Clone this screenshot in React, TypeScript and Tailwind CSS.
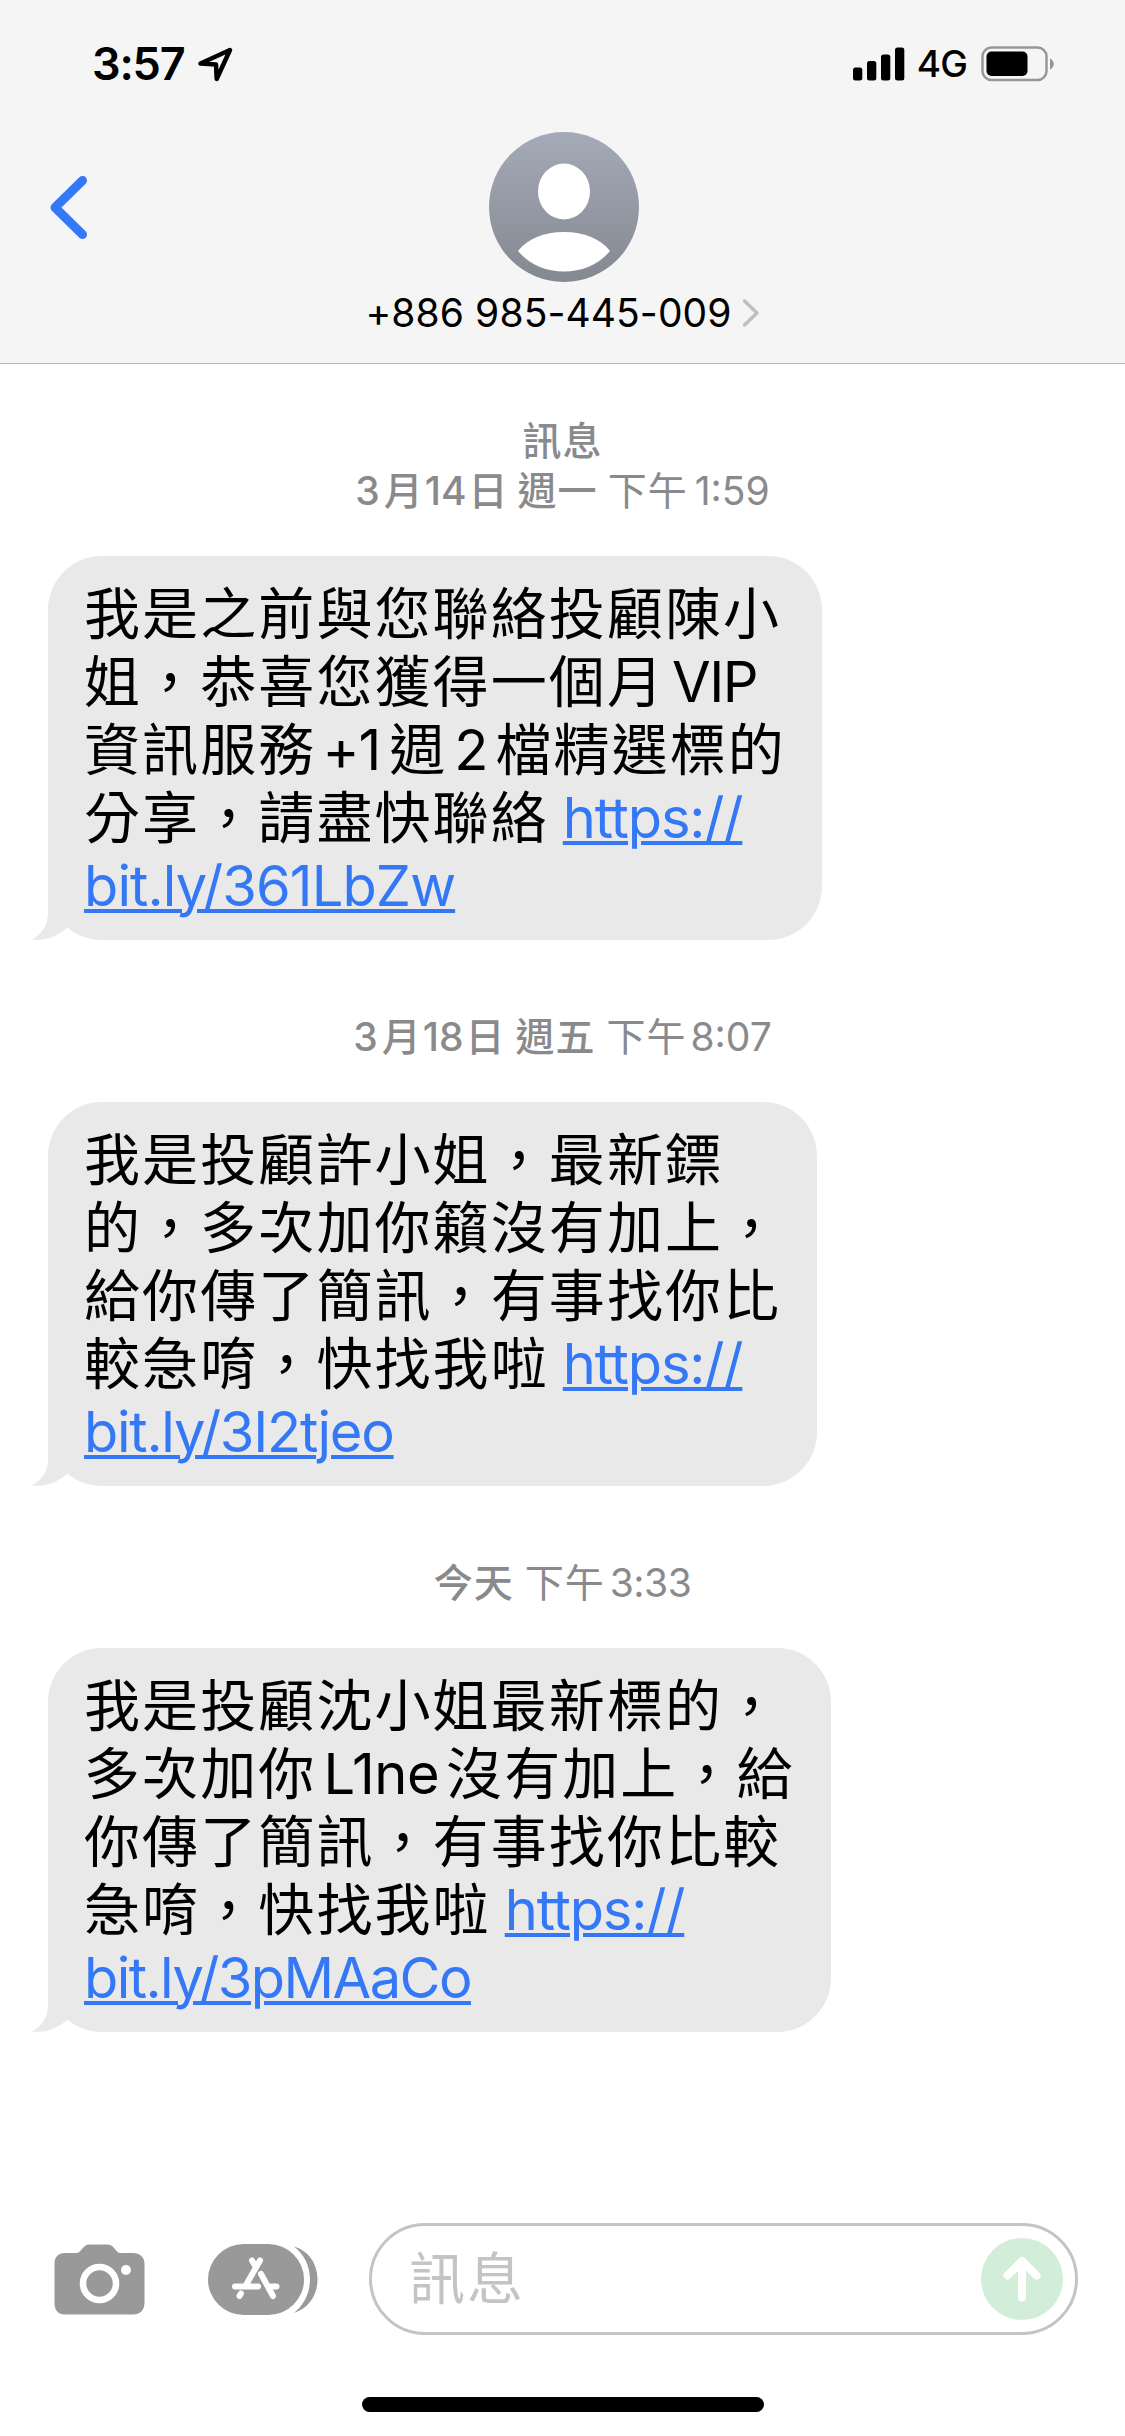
const sans = "font-['Inter','Noto_Sans_CJK_TC',sans-serif]";

type Run = { text: string; link?: boolean; cls: string };
type Message = { id: number; title?: string; stamp: Run[]; width: string; lines: Run[][] };

const CJK = "tracking-[2.1px]";
const DAY = "font-medium tracking-[1px]";

const messages: Message[] = [
  {
    id: 1,
    title: "訊息",
    stamp: [
      { text: "3", cls: "font-medium" },
      { text: "月", cls: "ml-[4px] font-medium" },
      { text: "14", cls: "ml-[2px] font-medium" },
      { text: "日", cls: "ml-[2px] font-medium" },
      { text: "週一", cls: `ml-[10px] ${DAY}` },
      { text: "下午", cls: "ml-[10px] tracking-[1px]" },
      { text: "1:59", cls: "ml-[7px]" },
    ],
    width: "w-[774px]",
    lines: [
      [{ text: "我是之前與您聯絡投顧陳小", cls: CJK }],
      [{ text: "姐，恭喜您獲得一個月", cls: CJK }, { text: "VIP", cls: "ml-[7px] tracking-[-1.5px]" }],
      [
        { text: "資訊服務", cls: CJK },
        { text: "+1", cls: "ml-[6px] tracking-[-1px]" },
        { text: "週", cls: "ml-[9px]" },
        { text: "2", cls: "ml-[9px]" },
        { text: "檔精選標的", cls: "ml-[7px] tracking-[2.1px]" },
      ],
      [
        { text: "分享，請盡快聯絡", cls: CJK },
        { text: "https://", link: true, cls: "ml-3.5 tracking-[-1.15px]" },
      ],
      [{ text: "bit.ly/361LbZw", link: true, cls: "tracking-[-0.9px]" }],
    ],
  },
  {
    id: 2,
    stamp: [
      { text: "3", cls: "font-medium" },
      { text: "月", cls: "ml-[4px] font-medium" },
      { text: "18", cls: "ml-[2px] font-medium" },
      { text: "日", cls: "ml-[2px] font-medium" },
      { text: "週五", cls: `ml-[11px] ${DAY}` },
      { text: "下午", cls: "ml-[11px] tracking-[1px]" },
      { text: "8:07", cls: "ml-[4px]" },
    ],
    width: "w-[769px]",
    lines: [
      [{ text: "我是投顧許小姐，最新鏢", cls: CJK }],
      [{ text: "的，多次加你籟沒有加上，", cls: CJK }],
      [{ text: "給你傳了簡訊，有事找你比", cls: CJK }],
      [
        { text: "較急唷，快找我啦", cls: CJK },
        { text: "https://", link: true, cls: "ml-3.5 tracking-[-1.15px]" },
      ],
      [{ text: "bit.ly/3I2tjeo", link: true, cls: "tracking-[-1.25px]" }],
    ],
  },
  {
    id: 3,
    stamp: [
      { text: "今天", cls: DAY },
      { text: "下午", cls: "ml-[11px] tracking-[1px]" },
      { text: "3:33", cls: "ml-[5px] tracking-[-0.5px]" },
    ],
    width: "w-[783px]",
    lines: [
      [{ text: "我是投顧沈小姐最新標的，", cls: CJK }],
      [
        { text: "多次加你", cls: CJK },
        { text: "L1ne", cls: "ml-[7px] tracking-[-0.5px]" },
        { text: "沒有加上，給", cls: "ml-[7px] tracking-[2.1px]" },
      ],
      [{ text: "你傳了簡訊，有事找你比較", cls: CJK }],
      [
        { text: "急唷，快找我啦", cls: CJK },
        { text: "https://", link: true, cls: "ml-3.5 tracking-[-1.15px]" },
      ],
      [{ text: "bit.ly/3pMAaCo", link: true, cls: "tracking-[-1.55px]" }],
    ],
  },
];

function StatusBar() {
  return (
    <div className="flex h-[132px] items-start justify-between pl-[92px] pr-[70px] pt-[36px]">
      <div className="flex items-center">
        <span className="text-[45px] leading-[56px] font-semibold tracking-[-1.2px]">3:57</span>
        <svg className="ml-[13px] h-[36px] w-[37px]" viewBox="0 0 37 36" fill="none">
          <path d="M33 4L3.500 17.500L19 18.500L19.700 33Z" stroke="#000" strokeWidth="4.500" strokeLinejoin="round" />
        </svg>
      </div>
      <div className="flex items-center">
        <svg className="h-[34px] w-[52px]" viewBox="0 0 52 34">
          <rect x="0" y="20.500" width="9.300" height="13" rx="2.500" />
          <rect x="14" y="14" width="9.300" height="19.500" rx="2.500" />
          <rect x="28" y="7.500" width="9.300" height="26" rx="2.500" />
          <rect x="42" y="0.500" width="9.300" height="33" rx="2.500" />
        </svg>
        <span className="ml-3 text-[37px] leading-[56px] font-medium tracking-[-0.8px]">4G</span>
        <svg className="ml-3.5 h-[36px] w-[74px]" viewBox="0 0 74 36">
          <rect x="1.500" y="1.500" width="64" height="32.500" rx="9" fill="none" stroke="#979797" strokeWidth="2.500" />
          <rect x="5.500" y="5.500" width="41" height="24.500" rx="5" />
          <path d="M69 12.500c5 2 5 9 0 11z" fill="#979797" />
        </svg>
      </div>
    </div>
  );
}

function Header() {
  return (
    <header className="h-[364px] shrink-0 border-b border-[#b2b2b2] bg-[#f5f5f5]">
      <StatusBar />
      <div className="grid grid-cols-3">
        <button className="ml-[48px] mt-[43px] h-[64px] w-[40px]" aria-label="Back">
          <svg className="h-[64px] w-[40px]" viewBox="0 0 40 64" fill="none">
            <path d="M34.500 5.500L7 32.500L34.500 59.500" stroke="#3478f6" strokeWidth="9" strokeLinecap="round" strokeLinejoin="round" />
          </svg>
        </button>
        <div className="flex flex-col items-center">
          <svg className="ml-[2px] h-[150px] w-[150px]" viewBox="0 0 150 150">
            <defs>
              <linearGradient id="avatar" x1="0" y1="0" x2="0" y2="1">
                <stop offset="0" stopColor="#a5aab8" />
                <stop offset="1" stopColor="#848891" />
              </linearGradient>
            </defs>
            <circle cx="75" cy="75" r="75" fill="url(#avatar)" />
            <ellipse cx="75" cy="59.500" rx="26" ry="28" fill="#fff" />
            <path d="M29 119C38 107 55 100 75 100S112 107 121 119C110 132 94 139.500 75 139.500S40 132 29 119Z" fill="#fff" />
          </svg>
          <div className="mt-[7px] flex items-center">
            <span className="text-[39px] leading-[48px] tracking-[0.1px] whitespace-nowrap">+886 985-445-009</span>
            <svg className="ml-2.5 h-[30px] w-[18px]" viewBox="0 0 18 30" fill="none">
              <path d="M2.500 3L15 15L2.500 27" stroke="#bfbfbf" strokeWidth="3.500" strokeLinecap="round" strokeLinejoin="round" />
            </svg>
          </div>
        </div>
      </div>
    </header>
  );
}

function Bubble({ message }: { message: Message }) {
  return (
    <div className={`relative ml-[48px] h-[384px] rounded-[54px] bg-[#e9e9e9] pt-[24px] pl-[36px] ${message.width}`}>
      <svg className="absolute bottom-0 -left-[16px] h-[60px] w-[60px]" viewBox="0 0 60 60">
        <path d="M16 0V33C16 45 10 54 0 59.500C14 61 26 56 35 48L60 30V0Z" fill="#e9e9e9" />
      </svg>
      <div className="relative">
        {message.lines.map((line, i) => (
          <p key={i} className="flex h-[68px] items-baseline text-[56px] leading-[68px] whitespace-nowrap">
            {line.map((run) =>
              run.link ? (
                <a
                  key={run.text}
                  href="#"
                  className={`text-[#3478f6] underline decoration-[4px] underline-offset-[3px] ${run.cls}`}
                >
                  {run.text}
                </a>
              ) : (
                <span key={run.text} className={run.cls}>
                  {run.text}
                </span>
              )
            )}
          </p>
        ))}
      </div>
    </div>
  );
}

function Stamp({ message }: { message: Message }) {
  return (
    <div className="text-center text-[39px] leading-[50px] text-[#8a8a8d]">
      {message.title && <p className="font-medium tracking-[1px]">{message.title}</p>}
      <p className="flex items-baseline justify-center whitespace-nowrap">
        {message.stamp.map((run) => (
          <span key={run.text} className={run.cls}>
            {run.text}
          </span>
        ))}
      </p>
    </div>
  );
}

function Composer() {
  return (
    <footer className="flex h-[213px] shrink-0 flex-col items-center">
      <div className="flex w-full items-center pr-[47px] pl-[54px]">
        <svg className="h-[71px] w-[91px]" viewBox="0 0 91 71">
          <path
            d="M11 9H22C28 9 28 0.500 36 0.500H53C61 0.500 61 9 67 9H79C86 9 90.500 13 90.500 20V59C90.500 66 86 70.500 79 70.500H11C4 70.500 0.500 66 0.500 59V20C0.500 13 4 9 11 9Z"
            fill="#999"
          />
          <circle cx="45.500" cy="39.500" r="16.500" fill="none" stroke="#fff" strokeWidth="6.500" />
          <circle cx="72" cy="26" r="5" fill="#fff" />
        </svg>
        <svg className="ml-[63px] h-[71px] w-[110px]" viewBox="0 0 110 71">
          <rect x="0" y="0" width="96" height="71" rx="35.500" fill="#999" />
          <path d="M86 2.500C101 7 109.500 20 109.500 35.500S101 64 86 69C96 61 102 49 102 35.500S96 10 86 2.500Z" fill="#999" />
          <g stroke="#fff" strokeWidth="6" strokeLinecap="round">
            <path d="M52 16.500L38 41M44 16.500L47.500 22.500M53 30L65 52" />
            <path d="M27 42.500H50M63 42.500H68.500M33 49.500L31.500 52" />
          </g>
        </svg>
        <div className="ml-[51px] flex h-[112px] flex-1 items-center justify-between rounded-full border-[3px] border-[#c4c4c4] pr-[12px] pl-[37px]">
          <span className="text-[56px] leading-[68px] tracking-[2px] text-[#c4c4c4]">訊息</span>
          <svg className="h-[82px] w-[82px]" viewBox="0 0 82 82" fill="none">
            <circle cx="41" cy="41" r="41" fill="#d3eed8" />
            <path d="M41 59.500V24M26.500 37.500L41 23L55.500 37.500" stroke="#fff" strokeWidth="8" strokeLinecap="round" strokeLinejoin="round" />
          </svg>
        </div>
      </div>
      <div className="mt-[62px] h-[15px] w-[402px] rounded-full bg-black" />
    </footer>
  );
}

export default function App() {
  return (
    <div className={`flex h-[2436px] w-[1125px] flex-col overflow-hidden bg-white text-black ${sans}`} lang="zh-Hant">
      <Header />
      <main className="flex flex-1 flex-col pt-[52px]">
        {messages.map((m) => (
          <section key={m.id} className="mb-[72px]">
            <Stamp message={m} />
            <div className="mt-[40px]">
              <Bubble message={m} />
            </div>
          </section>
        ))}
      </main>
      <Composer />
    </div>
  );
}
